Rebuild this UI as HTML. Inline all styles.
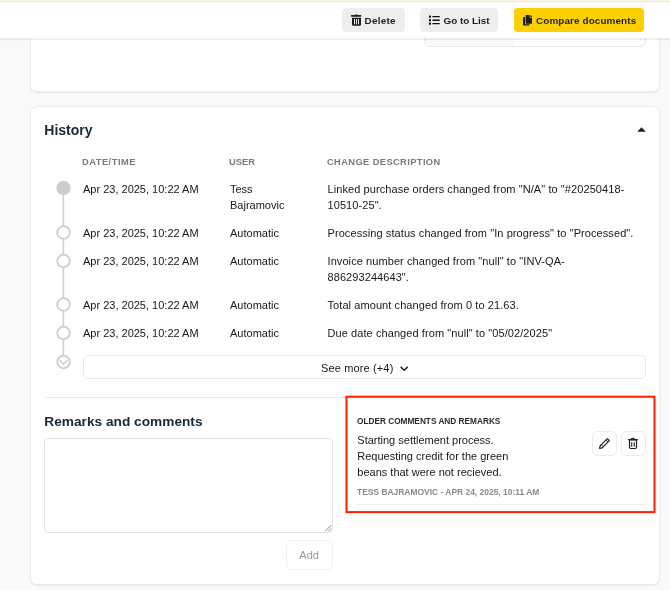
<!DOCTYPE html>
<html><head><meta charset="utf-8"><style>
html,body{margin:0;padding:0;}
body{width:670px;height:590px;overflow:hidden;position:relative;background:#f9f9f9;font-family:"Liberation Sans",sans-serif;}
.t{position:absolute;white-space:nowrap;}
#w{position:absolute;left:0;top:0;width:670px;height:590px;will-change:transform;}
.r{position:absolute;}
</style></head><body><div id="w">
<div class="r" style="left:30px;top:-20px;width:629.5px;height:111.5px;background:#fff;border:1px solid #ececec;border-radius:7px;box-shadow:0 1px 1.5px rgba(0,0,0,0.07);box-sizing:border-box;"></div>
<div class="r" style="left:423.5px;top:10px;width:222.5px;height:36.5px;background:linear-gradient(90deg,#f9f9f9 0,#f9f9f9 89px,#fff 89px);border:1px solid #e8e8e8;border-radius:6px;box-sizing:border-box;"></div>
<div class="r" style="left:0px;top:0px;width:670px;height:38px;background:#fff;"></div>
<div class="r" style="left:0px;top:0px;width:670px;height:1px;background:#faf6e3;"></div>
<div class="r" style="left:0px;top:1px;width:670px;height:1px;background:#ececec;"></div>
<div class="r" style="left:0px;top:2px;width:670px;height:1px;background:#f8f8f8;"></div>
<div class="r" style="left:0px;top:38px;width:670px;height:1px;background:rgba(0,0,0,0.05);"></div>
<div class="r" style="left:0px;top:39px;width:670px;height:1px;background:rgba(0,0,0,0.075);"></div>
<div class="r" style="left:0px;top:40px;width:670px;height:1px;background:rgba(0,0,0,0.012);"></div>
<div class="r" style="left:342px;top:8px;width:63px;height:24.3px;background:#eeeeee;border-radius:4px;"></div>
<div class="r" style="left:419.5px;top:8px;width:78.5px;height:24.3px;background:#eeeeee;border-radius:4px;"></div>
<div class="r" style="left:513.5px;top:8.3px;width:130.5px;height:24px;background:#ffd000;border-radius:4px;"></div>
<svg class="r" style="left:351px;top:14px" width="11" height="12" viewBox="0 0 11 12">
<path d="M4 0.4h2.5v1.2h-2.5z M0.1 1.1h10v1.7h-10z" fill="#1e1e1e"/>
<path d="M1 3.8h9v6.6a1.4 1.4 0 0 1 -1.4 1.4h-6.2a1.4 1.4 0 0 1 -1.4 -1.4z" fill="#1e1e1e"/>
<rect x="3" y="5" width="1" height="5.3" fill="#eee"/><rect x="5" y="5" width="1" height="5.3" fill="#eee"/><rect x="7" y="5" width="1" height="5.3" fill="#eee"/>
</svg>
<div class="t" style="left:364.6px;top:13.57px;font-size:9.9px;line-height:14px;color:#1e1e1e;font-weight:700;letter-spacing:0.25px;">Delete</div>
<svg class="r" style="left:428px;top:15px" width="13" height="10" viewBox="0 0 13 10">
<rect x="0.9" y="0.6" width="2.1" height="2.1" fill="#111"/><rect x="0.9" y="4.2" width="2.1" height="2.1" fill="#111"/><rect x="0.9" y="7.6" width="2.1" height="2.1" fill="#111"/>
<rect x="4.3" y="1" width="7.6" height="1.3" rx="0.6" fill="#111"/><rect x="4.3" y="4.6" width="7.6" height="1.3" rx="0.6" fill="#111"/><rect x="4.3" y="8" width="7.6" height="1.3" rx="0.6" fill="#111"/>
</svg>
<div class="t" style="left:443.5px;top:13.57px;font-size:9.9px;line-height:14px;color:#1e1e1e;font-weight:700;">Go to List</div>
<svg class="r" style="left:522.9px;top:15.1px" width="9.2" height="10.7" viewBox="0 0 448 512">
<path fill="#1d1d1d" d="M320 448v40c0 13.255-10.745 24-24 24H24c-13.255 0-24-10.745-24-24V120c0-13.255 10.745-24 24-24h72v296c0 30.879 25.121 56 56 56h168zm0-344V0H152c-13.255 0-24 10.745-24 24v368c0 13.255 10.745 24 24 24h272c13.255 0 24-10.745 24-24V128H344c-13.2 0-24-10.8-24-24zm120.971-31.029L375.029 7.029A24 24 0 0 0 358.059 0H352v96h96v-6.059a24 24 0 0 0-7.029-16.97z"/>
</svg>
<div class="t" style="left:536px;top:13.57px;font-size:9.9px;line-height:14px;color:#1e1e1e;font-weight:700;letter-spacing:0.12px;">Compare documents</div>
<div class="r" style="left:30px;top:106px;width:629.5px;height:478.5px;background:#fff;border:1px solid #ececec;border-radius:7px;box-shadow:0 1px 1.5px rgba(0,0,0,0.08);box-sizing:border-box;"></div>
<div class="t" style="left:44.3px;top:120.75px;font-size:14px;line-height:18px;color:#15293a;font-weight:700;">History</div>
<svg class="r" style="left:637px;top:127px" width="9" height="5" viewBox="0 0 9 5"><path d="M4.5 0.2L8.8 4.8H0.2z" fill="#0f2235"/></svg>
<div class="t" style="left:82px;top:155.68px;font-size:9.3px;line-height:12px;color:#7b7b7b;font-weight:700;letter-spacing:0.5px;">DATE/TIME</div>
<div class="t" style="left:229px;top:155.68px;font-size:9.3px;line-height:12px;color:#7b7b7b;font-weight:700;letter-spacing:0.05px;">USER</div>
<div class="t" style="left:327px;top:155.68px;font-size:9.3px;line-height:12px;color:#7b7b7b;font-weight:700;letter-spacing:0.4px;">CHANGE DESCRIPTION</div>
<div class="t" style="left:83px;top:180.59px;font-size:11px;line-height:16px;color:#181818;">Apr 23, 2025, 10:22 AM</div>
<div class="t" style="left:230px;top:180.59px;font-size:11px;line-height:16px;color:#181818;">Tess<br>Bajramovic</div>
<div class="t" style="left:327.5px;top:180.59px;font-size:11px;line-height:16px;color:#181818;letter-spacing:0.08px;">Linked purchase orders changed from "N/A" to "#20250418-<br>10510-25".</div>
<div class="t" style="left:83px;top:224.99px;font-size:11px;line-height:16px;color:#181818;">Apr 23, 2025, 10:22 AM</div>
<div class="t" style="left:230px;top:224.99px;font-size:11px;line-height:16px;color:#181818;">Automatic</div>
<div class="t" style="left:327.5px;top:224.99px;font-size:11px;line-height:16px;color:#181818;letter-spacing:0.08px;">Processing status changed from "In progress" to "Processed".</div>
<div class="t" style="left:83px;top:253.19px;font-size:11px;line-height:16px;color:#181818;">Apr 23, 2025, 10:22 AM</div>
<div class="t" style="left:230px;top:253.19px;font-size:11px;line-height:16px;color:#181818;">Automatic</div>
<div class="t" style="left:327.5px;top:253.19px;font-size:11px;line-height:16px;color:#181818;letter-spacing:0.08px;">Invoice number changed from "null" to "INV-QA-<br>886293244643".</div>
<div class="t" style="left:83px;top:296.69px;font-size:11px;line-height:16px;color:#181818;">Apr 23, 2025, 10:22 AM</div>
<div class="t" style="left:230px;top:296.69px;font-size:11px;line-height:16px;color:#181818;">Automatic</div>
<div class="t" style="left:327.5px;top:296.69px;font-size:11px;line-height:16px;color:#181818;letter-spacing:0.08px;">Total amount changed from 0 to 21.63.</div>
<div class="t" style="left:83px;top:325.19px;font-size:11px;line-height:16px;color:#181818;">Apr 23, 2025, 10:22 AM</div>
<div class="t" style="left:230px;top:325.19px;font-size:11px;line-height:16px;color:#181818;">Automatic</div>
<div class="t" style="left:327.5px;top:325.19px;font-size:11px;line-height:16px;color:#181818;letter-spacing:0.08px;">Due date changed from "null" to "05/02/2025"</div>
<svg class="r" style="left:50px;top:170px" width="30" height="210" viewBox="50 170 30 210"><rect x="62.6" y="190" width="1.6" height="166" fill="#d0d0d0"/><circle cx="63.5" cy="188" r="7.2" fill="#cccccc"/><circle cx="63.5" cy="232.5" r="6.3" fill="#fff" stroke="#cbcbcb" stroke-width="1.7"/><circle cx="63.5" cy="261" r="6.3" fill="#fff" stroke="#cbcbcb" stroke-width="1.7"/><circle cx="63.5" cy="304.5" r="6.3" fill="#fff" stroke="#cbcbcb" stroke-width="1.7"/><circle cx="63.5" cy="333" r="6.3" fill="#fff" stroke="#cbcbcb" stroke-width="1.7"/><circle cx="63.5" cy="362" r="6.3" fill="#fff" stroke="#cbcbcb" stroke-width="1.7"/><path d="M59.6 360.2L63.5 364.1L67.4 360.2" fill="none" stroke="#c8c8c8" stroke-width="1.3"/></svg>
<div class="r" style="left:83px;top:355px;width:563px;height:23.5px;background:#fff;border:1px solid #e9e9e9;border-radius:5px;box-sizing:border-box;"></div>
<div class="t" style="left:321px;top:360.29px;font-size:11px;line-height:16px;color:#181818;letter-spacing:0.14px;">See more (+4)</div>
<svg class="r" style="left:400px;top:366px" width="9" height="6" viewBox="0 0 9 6"><path d="M0.7 0.9L4.2 4.3L7.7 0.9" fill="none" stroke="#222" stroke-width="1.5"/></svg>
<div class="r" style="left:44.5px;top:397px;width:601.5px;height:1.2px;background:#ebebeb;"></div>
<div class="t" style="left:44.3px;top:412.55px;font-size:13.7px;line-height:18px;color:#15293a;font-weight:700;">Remarks and comments</div>
<div class="r" style="left:44.3px;top:437.5px;width:288.5px;height:95px;background:#fff;border:1px solid #e3e3e3;border-radius:4px;box-sizing:border-box;"></div>
<svg class="r" style="left:324px;top:524px" width="8" height="8" viewBox="0 0 8 8"><path d="M7.2 1.2L1.2 7.2M7.2 4.4L4.4 7.2" stroke="#777" stroke-width="0.9"/></svg>
<div class="r" style="left:285.5px;top:540px;width:47px;height:30.2px;background:#fff;border:1px solid #f1f1f1;border-radius:5px;box-sizing:border-box;"></div>
<div class="t" style="left:299.3px;top:547.19px;font-size:11px;line-height:16px;color:#9a9a9a;">Add</div>
<svg class="r" style="left:340px;top:390px" width="322" height="130" viewBox="340 390 322 130"><rect x="346.5" y="396.7" width="308" height="115.4" fill="none" stroke="#ff1f00" stroke-width="2"/></svg>
<div class="t" style="left:357.3px;top:415.29px;font-size:8.7px;line-height:12px;color:#2a2a2a;font-weight:700;transform:scaleX(0.951);transform-origin:0 0;">OLDER COMMENTS AND REMARKS</div>
<div class="t" style="left:357.3px;top:431.54px;font-size:11px;line-height:16.1px;color:#181818;">Starting settlement process.<br>Requesting credit for the green<br>beans that were not recieved.</div>
<div class="t" style="left:357.3px;top:485.55px;font-size:8.5px;line-height:12px;color:#8a8a8a;font-weight:700;transform:scaleX(0.993);transform-origin:0 0;">TESS BAJRAMOVIC - APR 24, 2025, 10:11 AM</div>
<div class="r" style="left:357px;top:504px;width:289px;height:1px;background:#ededed;"></div>
<div class="r" style="left:592px;top:431px;width:25.2px;height:24.7px;background:#fff;border:1px solid #ececec;border-radius:5px;box-sizing:border-box;"></div>
<div class="r" style="left:621px;top:431px;width:24.7px;height:24.7px;background:#fff;border:1px solid #ececec;border-radius:5px;box-sizing:border-box;"></div>
<svg class="r" style="left:598px;top:437px" width="13" height="13" viewBox="0 0 13 13">
<path d="M9.3 1.6L11.4 3.7L4.2 10.9L1.6 11.4L2.1 8.8z" fill="none" stroke="#222" stroke-width="1.2" stroke-linejoin="round"/>
<path d="M7.9 3L10 5.1M3.2 7.7L5.3 9.8" stroke="#222" stroke-width="1"/>
</svg>
<svg class="r" style="left:627.3px;top:437px" width="12" height="13" viewBox="0 0 12 13">
<path d="M1.2 2.6h9.6" stroke="#222" stroke-width="1.2"/>
<path d="M4.3 2.4a1.7 1.2 0 0 1 3.4 0" fill="none" stroke="#222" stroke-width="1.1"/>
<path d="M2.5 3h7v7.3a1.2 1.2 0 0 1 -1.2 1.2h-4.6a1.2 1.2 0 0 1 -1.2 -1.2z" fill="none" stroke="#222" stroke-width="1.2"/>
<path d="M4.7 5.2v4.5M7.2 5.2v4.5" stroke="#222" stroke-width="1.1"/>
</svg>
</div></body></html>
